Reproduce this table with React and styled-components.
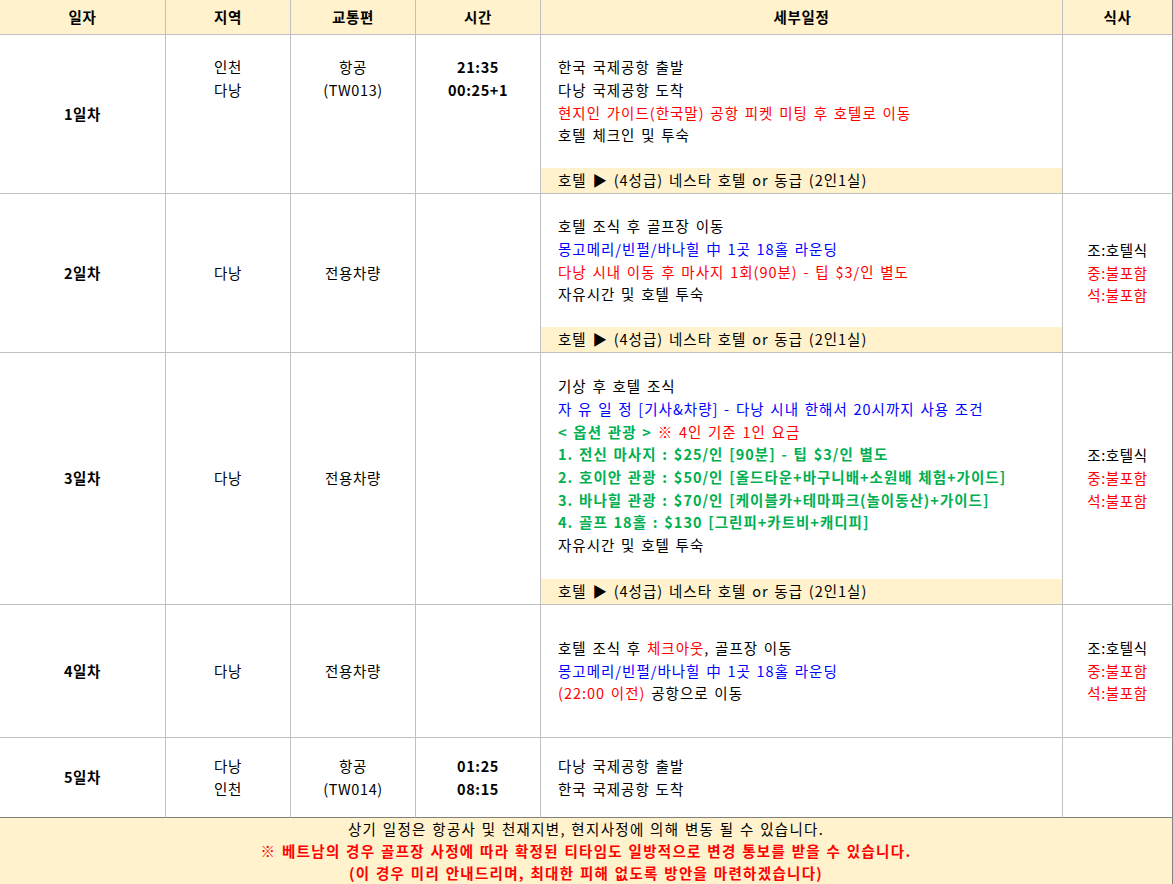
import React from 'react';
import styled, { createGlobalStyle } from 'styled-components';

const GlobalStyle = createGlobalStyle`
  body {
    margin: 0;
    background: #fff;
    color: #000;
    font-family: "Noto Sans CJK KR", "Liberation Sans", sans-serif;
  }
`;

const COLS = '166px 125px 125px 125px 522px 110px';
const GRID = '#c0c0c0';
const EDGE = '#808080';
const CREAM = '#fff2cc';

const Sheet = styled.div`
  width: 1173px;
  display: flex;
  flex-direction: column;
  font-size: 14.5px;
  letter-spacing: 0.6px;
`;

const Row = styled.div`
  display: grid;
  grid-template-columns: ${COLS};
  height: ${(p) => p.$h}px;
`;

const Cell = styled.div`
  box-sizing: border-box;
  min-width: 0;
  padding-top: ${(p) => (p.$top ? '21px' : '0')};
  border-right: 1px solid ${(p) => (p.$last ? EDGE : GRID)};
  border-bottom: 1px solid ${(p) => (p.$edge ? EDGE : GRID)};
  background: ${(p) => (p.$head ? CREAM : '#fff')};
  display: flex;
  flex-direction: column;
  align-items: center;
  justify-content: ${(p) => (p.$top ? 'flex-start' : 'center')};
  text-align: center;
  line-height: 22.7px;
  font-weight: ${(p) => (p.$bold ? 700 : 400)};
`;

const DetailCell = styled.div`
  box-sizing: border-box;
  min-width: 0;
  border-right: 1px solid ${GRID};
  border-bottom: 1px solid ${(p) => (p.$edge ? EDGE : GRID)};
  display: flex;
  flex-direction: column;
  line-height: 22.7px;
  letter-spacing: 1px;
  word-spacing: 1.5px;
  white-space: nowrap;
`;

const DetailBody = styled.div`
  flex: 1;
  display: flex;
  flex-direction: column;
  justify-content: center;
  padding-left: 17px;
`;

const HotelBar = styled.div`
  height: 25px;
  background: ${CREAM};
  padding-left: 17px;
  display: flex;
  align-items: center;
`;

const Text = styled.span`
  color: ${(p) => p.$c || 'inherit'};
  font-weight: ${(p) => (p.$bold ? 700 : 'inherit')};
`;

const Footer = styled.div`
  box-sizing: border-box;
  height: 67px;
  background: ${CREAM};
  border-right: 1px solid ${EDGE};
  border-bottom: 1px solid ${EDGE};
  display: flex;
  flex-direction: column;
  align-items: center;
  justify-content: center;
  line-height: 21.7px;
  letter-spacing: 1.3px;
  word-spacing: 1px;
  white-space: nowrap;
`;

const RED = '#ff0000';
const BLUE = '#0000ff';
const GREEN = '#00b050';

const HOTEL = '호텔 ▶ (4성급) 네스타 호텔 or 동급 (2인1실)';

const meals = [
  { t: '조:호텔식' },
  { t: '중:불포함', c: RED },
  { t: '석:불포함', c: RED },
];

const days = [
  {
    h: 159,
    day: '1일차',
    area: ['인천', '다낭'],
    trans: ['항공', '(TW013)'],
    time: ['21:35', '00:25+1'],
    top: true,
    hotel: true,
    lines: [
      [{ t: '한국 국제공항 출발' }],
      [{ t: '다낭 국제공항 도착' }],
      [{ t: '현지인 가이드(한국말) 공항 피켓 미팅 후 호텔로 이동', c: RED }],
      [{ t: '호텔 체크인 및 투숙' }],
    ],
  },
  {
    h: 159,
    day: '2일차',
    area: ['다낭'],
    trans: ['전용차량'],
    time: [],
    hotel: true,
    meals: true,
    lines: [
      [{ t: '호텔 조식 후 골프장 이동' }],
      [{ t: '몽고메리/빈펄/바나힐 中 1곳 18홀 라운딩', c: BLUE }],
      [{ t: '다낭 시내 이동 후 마사지 1회(90분) - 팁 $3/인 별도', c: RED }],
      [{ t: '자유시간 및 호텔 투숙' }],
    ],
  },
  {
    h: 252,
    day: '3일차',
    area: ['다낭'],
    trans: ['전용차량'],
    time: [],
    hotel: true,
    meals: true,
    lines: [
      [{ t: '기상 후 호텔 조식' }],
      [{ t: '자 유 일 정 [기사&차량] - 다낭 시내 한해서 20시까지 사용 조건', c: BLUE }],
      [
        { t: '< 옵션 관광 > ', c: GREEN, b: true },
        { t: '※ 4인 기준 1인 요금', c: RED },
      ],
      [{ t: '1. 전신 마사지 : $25/인 [90분] - 팁 $3/인 별도', c: GREEN, b: true }],
      [{ t: '2. 호이안 관광 : $50/인 [올드타운+바구니배+소원배 체험+가이드]', c: GREEN, b: true }],
      [{ t: '3. 바나힐 관광 : $70/인 [케이블카+테마파크(놀이동산)+가이드]', c: GREEN, b: true }],
      [{ t: '4. 골프 18홀 : $130 [그린피+카트비+캐디피]', c: GREEN, b: true }],
      [{ t: '자유시간 및 호텔 투숙' }],
    ],
  },
  {
    h: 133,
    day: '4일차',
    area: ['다낭'],
    trans: ['전용차량'],
    time: [],
    meals: true,
    lines: [
      [{ t: '호텔 조식 후 ' }, { t: '체크아웃', c: RED }, { t: ', 골프장 이동' }],
      [{ t: '몽고메리/빈펄/바나힐 中 1곳 18홀 라운딩', c: BLUE }],
      [{ t: '(22:00 이전)', c: RED }, { t: ' 공항으로 이동' }],
    ],
  },
  {
    h: 80,
    day: '5일차',
    area: ['다낭', '인천'],
    trans: ['항공', '(TW014)'],
    time: ['01:25', '08:15'],
    edge: true,
    lines: [[{ t: '다낭 국제공항 출발' }], [{ t: '한국 국제공항 도착' }]],
  },
];

const Lines = ({ items }) => items.map((s) => <div key={s}>{s}</div>);

const Segments = ({ parts }) =>
  parts.map((p, i) => (
    <Text key={i} $c={p.c} $bold={p.b}>
      {p.t}
    </Text>
  ));

const headers = ['일자', '지역', '교통편', '시간', '세부일정', '식사'];

export default function App() {
  return (
    <>
      <GlobalStyle />
      <Sheet>
        <Row $h={35}>
          {headers.map((h, i) => (
            <Cell key={h} $head $bold $last={i === headers.length - 1}>
              {h}
            </Cell>
          ))}
        </Row>
        {days.map((d) => (
          <Row key={d.day} $h={d.h}>
            <Cell $bold $edge={d.edge}>
              {d.day}
            </Cell>
            <Cell $edge={d.edge} $top={d.top}>
              <Lines items={d.area} />
            </Cell>
            <Cell $edge={d.edge} $top={d.top}>
              <Lines items={d.trans} />
            </Cell>
            <Cell $bold $edge={d.edge} $top={d.top}>
              <Lines items={d.time} />
            </Cell>
            <DetailCell $edge={d.edge}>
              <DetailBody>
                {d.lines.map((parts, i) => (
                  <div key={i}>
                    <Segments parts={parts} />
                  </div>
                ))}
              </DetailBody>
              {d.hotel && <HotelBar>{HOTEL}</HotelBar>}
            </DetailCell>
            <Cell $last $edge={d.edge}>
              {d.meals &&
                meals.map((m) => (
                  <Text key={m.t} $c={m.c} as="div">
                    {m.t}
                  </Text>
                ))}
            </Cell>
          </Row>
        ))}
        <Footer>
          <div>상기 일정은 항공사 및 천재지변, 현지사정에 의해 변동 될 수 있습니다.</div>
          <Text as="div" $c={RED} $bold>
            ※ 베트남의 경우 골프장 사정에 따라 확정된 티타임도 일방적으로 변경 통보를 받을 수 있습니다.
          </Text>
          <Text as="div" $c={RED} $bold>
            (이 경우 미리 안내드리며, 최대한 피해 없도록 방안을 마련하겠습니다)
          </Text>
        </Footer>
      </Sheet>
    </>
  );
}
